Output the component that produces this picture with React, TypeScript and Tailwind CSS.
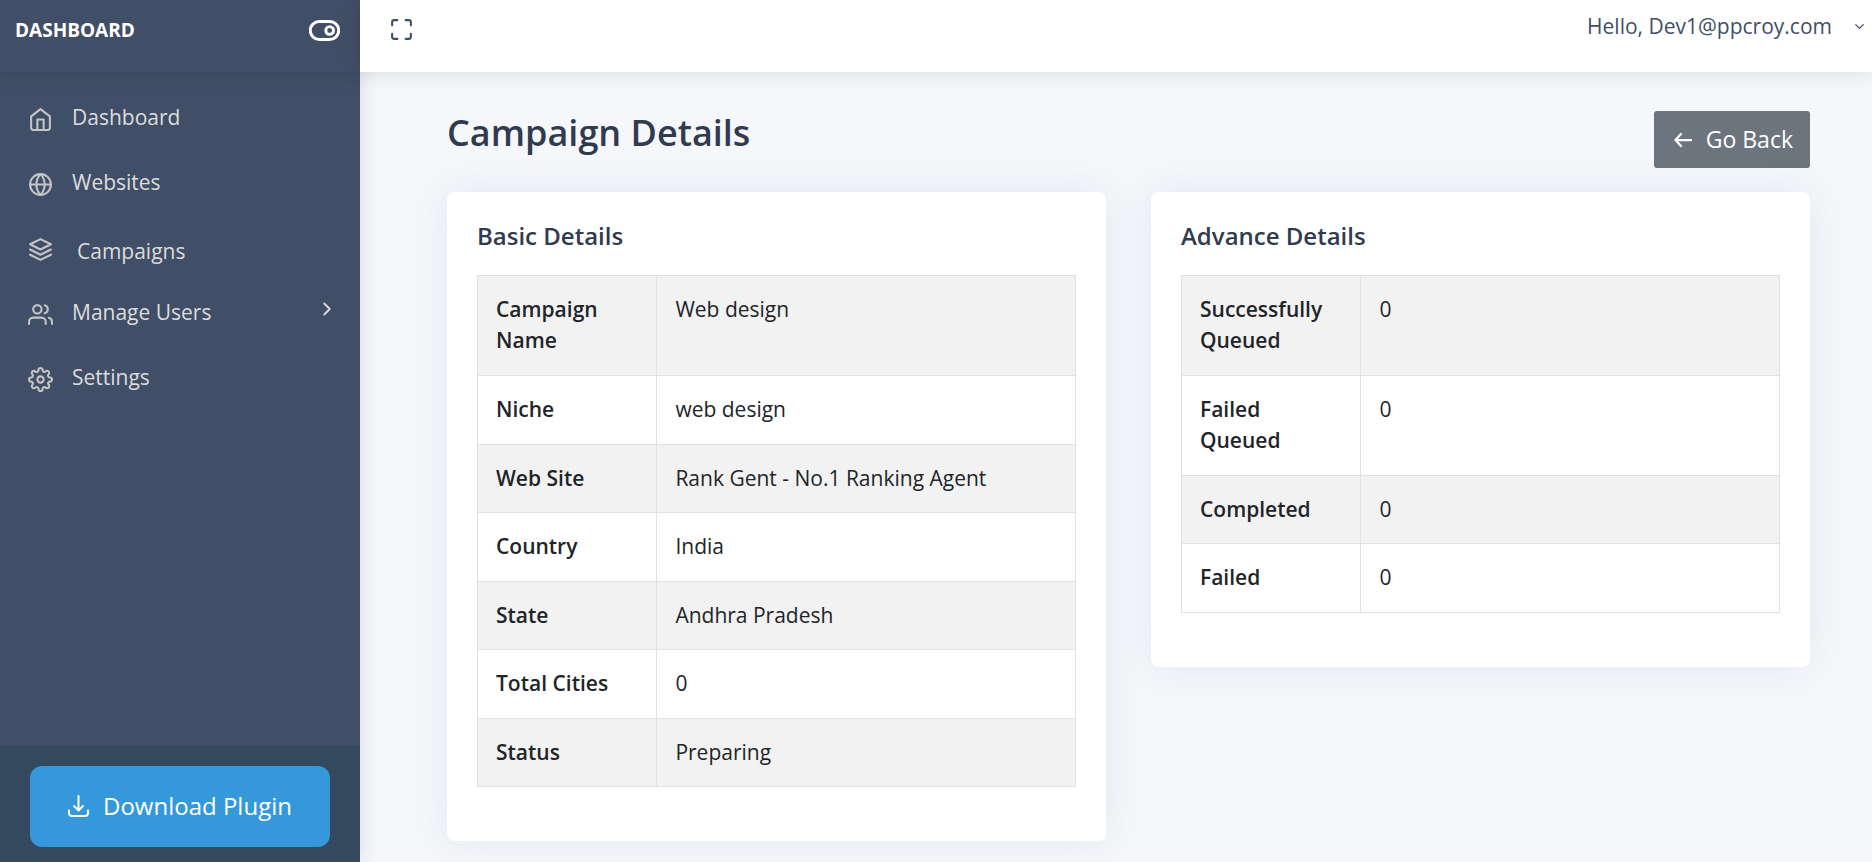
import { useState } from "react";
import type { ReactNode } from "react";
import {
  FiChevronDown,
  FiChevronRight,
  FiGlobe,
  FiHome,
  FiLayers,
  FiMaximize,
  FiSettings,
  FiToggleRight,
  FiUsers,
} from "react-icons/fi";

interface DetailRow {
  label: string;
  value: string;
}

const basicDetails: DetailRow[] = [
  { label: "Campaign Name", value: "Web design" },
  { label: "Niche", value: "web design" },
  { label: "Web Site", value: "Rank Gent - No.1 Ranking Agent" },
  { label: "Country", value: "India" },
  { label: "State", value: "Andhra Pradesh" },
  { label: "Total Cities", value: "0" },
  { label: "Status", value: "Preparing" },
];

const advanceDetails: DetailRow[] = [
  { label: "Successfully Queued", value: "0" },
  { label: "Failed Queued", value: "0" },
  { label: "Completed", value: "0" },
  { label: "Failed", value: "0" },
];

function DownloadIcon() {
  return (
    <svg
      width="21"
      height="22"
      viewBox="0 0 21 22"
      fill="none"
      stroke="currentColor"
      strokeWidth="2"
      strokeLinecap="round"
      strokeLinejoin="round"
      aria-hidden="true"
    >
      <path d="M10.5 1v14M6 11l4.5 4.5L15 11" />
      <path d="M1 15.5V18a3 3 0 0 0 3 3h13a3 3 0 0 0 3-3v-2.5" />
    </svg>
  );
}

function ArrowLeftIcon() {
  return (
    <svg
      width="18"
      height="14"
      viewBox="0 0 18 14"
      fill="none"
      stroke="currentColor"
      strokeWidth="2.25"
      strokeLinecap="round"
      strokeLinejoin="round"
      aria-hidden="true"
    >
      <path d="M17 7H1.5M7 1 1.5 7 7 13" />
    </svg>
  );
}

interface NavItemProps {
  icon: ReactNode;
  label: string;
  className?: string;
  labelClassName?: string;
  children?: ReactNode;
}

function NavItem({
  icon,
  label,
  className = "gap-[19px]",
  labelClassName = "pb-1",
  children,
}: NavItemProps) {
  return (
    <li>
      <a
        href="#"
        className={`flex h-[65px] items-center pl-7 pr-[22px] text-[21px] text-[#dcdcdc] ${className}`}
      >
        <span className="text-[#c4c4c4]">{icon}</span>
        <span className={labelClassName}>{label}</span>
        {children}
      </a>
    </li>
  );
}

function Sidebar() {
  return (
    <aside className="flex w-[360px] shrink-0 flex-col bg-[#414e67] shadow-[0_0_20px_rgba(0,0,0,0.12)]">
      <div className="flex h-[72px] items-start justify-between pl-[15px] pr-5 pt-[15px] shadow-[0_0_20px_rgba(0,0,0,0.15)]">
        <h2 className="text-[19px] font-bold leading-[30px] text-white">
          DASHBOARD
        </h2>
        <button aria-label="Toggle sidebar" className="text-white">
          <FiToggleRight size={31} strokeWidth={2.25} />
        </button>
      </div>

      <nav className="flex-1 pt-[15px]">
        <ul>
          <NavItem icon={<FiHome size={25} />} label="Dashboard" />
          <NavItem icon={<FiGlobe size={25} />} label="Websites" />
          <NavItem
            icon={<FiLayers size={25} />}
            label="Campaigns"
            className="gap-6"
            labelClassName="pt-1"
          />
          <NavItem icon={<FiUsers size={25} />} label="Manage Users">
            <FiChevronRight size={22} className="mb-3 ml-auto" />
          </NavItem>
          <NavItem icon={<FiSettings size={25} />} label="Settings" />
        </ul>
      </nav>

      <div className="bg-[#34495e] px-[30px] pb-[15px] pt-5">
        <button className="flex h-[81px] w-full items-center justify-center gap-[14px] rounded-xl bg-[#3498db] pb-0.5 text-[24px] text-white">
          <DownloadIcon />
          Download Plugin
        </button>
      </div>
    </aside>
  );
}

function DetailCard({ title, rows }: { title: string; rows: DetailRow[] }) {
  return (
    <section className="rounded-lg bg-white px-[30px] pb-[54px] pt-[29px] shadow-[0_0_40px_rgba(89,102,122,0.1)]">
      <h4 className="mb-6 text-[24px] font-semibold leading-[30px] text-[#313b50]">
        {title}
      </h4>
      <table className="w-full table-fixed border-collapse text-left text-[21px] leading-[31px] text-[#212529]">
        <tbody>
          {rows.map((row) => (
            <tr
              key={row.label}
              className="align-top odd:bg-[#f2f2f2] first:[&>*]:pb-[19px] even:[&>*]:pb-[19px]"
            >
              <th
                scope="row"
                className="w-[30%] border border-[#dee2e6] p-[18px] font-semibold"
              >
                {row.label}
              </th>
              <td className="border border-[#dee2e6] p-[18px]">{row.value}</td>
            </tr>
          ))}
        </tbody>
      </table>
    </section>
  );
}

function App() {
  const [menuOpen, setMenuOpen] = useState<boolean>(false);
  return (
    <div className="flex min-h-screen bg-[#f5f7fb] font-['Open_Sans',sans-serif]">
      <Sidebar />
      <div className="flex min-w-0 flex-1 flex-col">
        <header className="flex h-[72px] items-start justify-between bg-white pl-[29px] pr-[5px] shadow-[0_0_20px_rgba(0,0,0,0.12)]">
          <button aria-label="Full screen" className="pt-[17px] text-[#414e67]">
            <FiMaximize size={25} />
          </button>
          <button
            onClick={() => setMenuOpen(!menuOpen)}
            aria-expanded={menuOpen}
            className="flex items-center gap-5 pt-[10px] text-[21px] leading-8 text-[#414e67]"
          >
            Hello, Dev1@ppcroy.com
            <FiChevronDown size={15} />
          </button>
        </header>

        <main className="pb-[21px] pl-[87px] pr-[62px] pt-[39px]">
          <div className="mb-6 flex items-start justify-between">
            <h1 className="text-[36px] font-semibold leading-[44px] text-[#313b50]">
              Campaign Details
            </h1>
            <a
              href="#"
              className="flex h-[57px] items-center gap-[14px] rounded-[3px] bg-[#6c757d] pl-5 pr-[17px] text-[23px] text-white"
            >
              <ArrowLeftIcon />
              Go Back
            </a>
          </div>

          <div className="grid grid-cols-2 items-start gap-[45px]">
            <DetailCard title="Basic Details" rows={basicDetails} />
            <DetailCard title="Advance Details" rows={advanceDetails} />
          </div>
        </main>
      </div>
    </div>
  );
}

export default App;
